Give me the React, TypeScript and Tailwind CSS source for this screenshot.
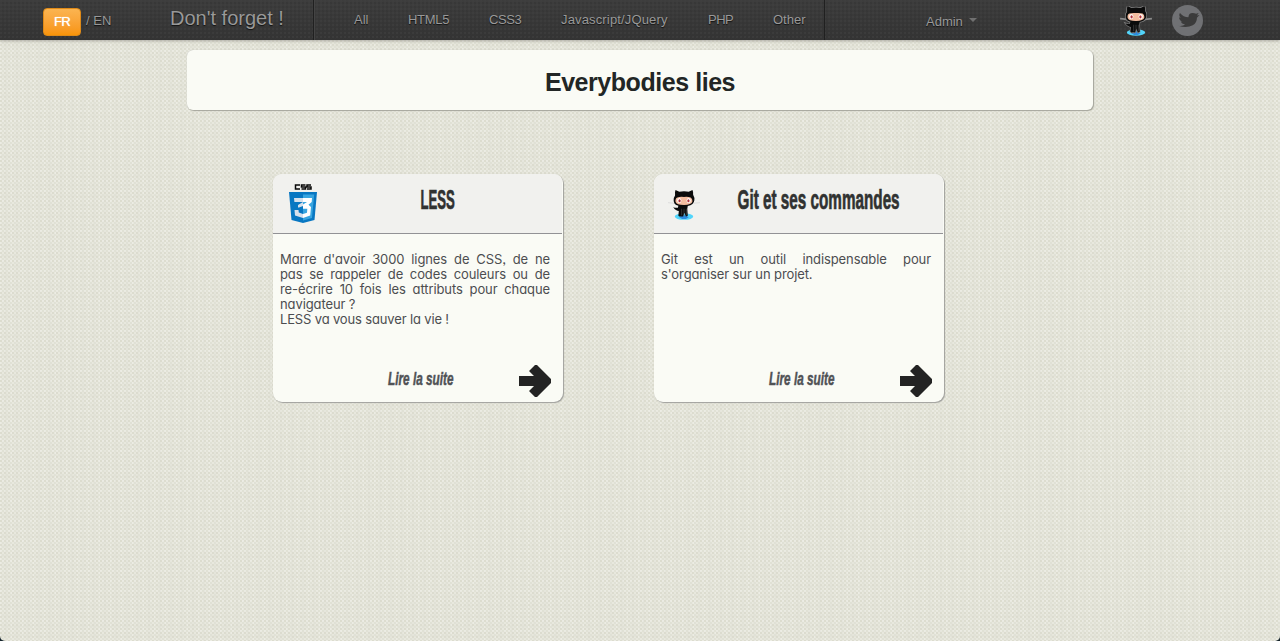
import type { ReactNode } from "react";

function Octocat({ className, dark = false }: { className: string; dark?: boolean }) {
  return (
    <svg viewBox="0 0 34 32" className={className}>
      <path d="M0 13.500 10 14.500M24 14.500 34 13.500" stroke={dark ? "#8b8b8b" : "#dcdcdc"} strokeWidth={dark ? 2 : 1} />
      <ellipse cx="17" cy="28.300" rx="9.800" ry="3.500" fill="#52d5fb" />
      <path d="M12 29q5-4 10 0l-3 2h-4z" fill="#2b8be0" />
      <g stroke={dark ? "#858585" : "none"} strokeWidth="1.4" paintOrder="stroke">
        <path d="M8 0 12 2q5-1 10 0l4-2q1 2 .7 5 1.800 3 1.300 6-.5 5-7 6l-.5 3 .5 7.500-2 .8-1.500-4-1.500 4-2-.2-2 .2-1-1 .5-5q-3 0-6-4 3 1 5 .5l.500-2Q6 16 6 11q0-3 1.500-5Q7 2 8 0z" fill="#0b0b0b" />
      </g>
      <path d="M10 8q3-1 7-.5 4-.5 7 .5 2 1 2 4-1 4-9 4T8 12.500Q7.500 9 10 8z" fill="#f4bda0" />
      <ellipse cx="12" cy="11.300" rx="2.200" ry="2.700" fill="#fff" />
      <ellipse cx="22" cy="11.300" rx="2.200" ry="2.700" fill="#fff" />
      <ellipse cx="12.300" cy="11.500" rx="1.200" ry="1.700" fill="#b02f3a" />
      <ellipse cx="21.700" cy="11.500" rx="1.200" ry="1.700" fill="#b02f3a" />
      <path d="M14.500 20v7M17 20v8M19.500 20v7" stroke="#555" strokeWidth=".6" />
    </svg>
  );
}

function CssLogo() {
  return (
    <svg viewBox="0 0 28 39" className="h-[39px] w-7">
      <path d="M11 1H6.500v4H11M16.500 1H12.500v2h4v2h-4M22 1h-4v2h4v2h-4" fill="none" stroke="#080808" strokeWidth="1.500" />
      <path d="M0 8h28l-2.500 28L14 39 2.500 36z" fill="#0877c2" />
      <path d="M14 10.500h11.200L23 34l-9 2.600z" fill="#38a5e0" />
      <path d="M5 14h9v4H5.400zM14 18v4l-4 1.500H9V21zM5.500 26h4l.3 2.600L14 30v4l-8-2.500z" fill="#d7e1ec" />
      <path d="M14 14h9l-.3 4-3.200 2.800L22 23l-.8 8.500L14 34v-4l4-1.300.3-4H14v-4.200L18 18h-4z" fill="#fff" />
    </svg>
  );
}

function Card({ title, icon, children }: { title: ReactNode; icon: ReactNode; children: ReactNode }) {
  return (
    <article className="flex h-[228px] w-[290px] flex-col overflow-hidden rounded-[9px] bg-[#fafbf5] shadow-[1px_1px_1px_#a0a09d,0_0_1px_#c5c5bd]">
      <header className="mr-px flex h-[60px] shrink-0 border-b border-[#929295] bg-[#f1f1ee]">
        <div className="w-[56px] shrink-0 pl-[14px] pt-[10px]">{icon}</div>
        <h2 className="ml-px mr-4 flex min-w-0 flex-1 justify-center pt-[8px] font-['Liberation_Sans',sans-serif] text-[28px] font-bold leading-9 text-[#303231] [-webkit-text-stroke:0.7px_#303231]">{title}</h2>
      </header>
      <div className="h-[127px] pl-[7px] pr-[13px] pt-[18px] font-[Inter,sans-serif] text-[13px] leading-[15px] tracking-[-0.1px] text-[#4c4d50]">{children}</div>
      <footer className="flex h-10 items-start pl-[114px]">
        <a href="#" className="flex w-[67px] justify-center whitespace-nowrap pt-[6px] font-['Liberation_Sans',sans-serif] text-[19px] font-bold italic leading-6 text-[#505255] [-webkit-text-stroke:0.5px_#505255]"><span className="shrink-0 scale-x-[0.62]">Lire la suite</span></a>
        <svg viewBox="0 0 32 32" className="ml-[65px] mt-[4px] size-8"><path d="M0 11h15l-5-5 6-6h2l14 14v4L18 32h-2l-6-6 5-5H0z" fill="#232323" /></svg>
      </footer>
    </article>
  );
}

export default function App() {
  return (
    <div className="h-[641px] overflow-hidden bg-[#16242c] font-['Liberation_Sans',sans-serif]">
      <div className="h-full rounded-b-[5px] bg-[#e8e8de] bg-[radial-gradient(circle_at_1px_1px,#dcdccf_0.7px,transparent_1px),radial-gradient(circle_at_3px_3px,#e0e1d5_0.7px,transparent_1px),linear-gradient(90deg,#ecece4_1px,transparent_1px,transparent_5px,#e2e2d8_6px,transparent_7px),linear-gradient(#ebebe3_1px,transparent_2px,transparent_5px,#e1e1d6_6px,transparent_7px)] bg-[size:4px_4px,4px_4px,11px_3px,5px_10px]">
        <nav className="flex h-10 bg-[#383838] bg-[radial-gradient(circle_at_1px_1px,#404040_0.5px,transparent_1px),radial-gradient(circle_at_3px_3px,#343434_0.5px,transparent_1px),linear-gradient(#3d3d3d,#333)] bg-[size:4px_4px,4px_4px,100%_100%] text-[13px] leading-5 text-[#999] shadow-[0_1px_3px_#aaa9a0] [text-shadow:0_1px_1px_#111]">
          <div className="flex w-[170px] pl-[43px] pt-2">
            <a href="#" className="h-7 w-[38px] rounded-[4px] border border-[#df8a17] bg-linear-to-b from-[#fbb450] to-[#f89406] pt-[3px] text-center tracking-[-0.6px] text-white [text-shadow:0_0_1px_white]">FR</a>
            <span className="ml-[5px] whitespace-nowrap pt-[3px]">/ EN</span>
          </div>
          <a href="#" className="w-[144px] whitespace-nowrap border-r border-[#202020] pt-[7px] text-[20px] leading-[22px]">Don't forget !</a>
          <div className="flex w-[511px] border-r border-[#202020] pl-10 pt-[10px] shadow-[inset_1px_0_#444]">
            <a href="#" className="w-[54px]">All</a>
            <a href="#" className="w-[81px] tracking-[-0.3px]">HTML5</a>
            <a href="#" className="w-[72px] tracking-[-0.4px]">CSS3</a>
            <a href="#" className="w-[147px] tracking-[0.15px]">Javascript/JQuery</a>
            <a href="#" className="w-[65px] tracking-[-0.5px]">PHP</a>
            <a href="#">Other</a>
          </div>
          <div className="flex w-[295px] pl-[101px] pt-[11px]"><span className="pt-px">Admin</span><span className="ml-[6px] mt-[7px] h-0 w-0 border-x-4 border-t-4 border-x-transparent border-t-[#707070]" /></div>
          <Octocat dark className="mt-[6px] h-[30px] w-8" />
          <svg viewBox="0 0 32 32" className="ml-5 mt-1 size-8"><circle cx="15.500" cy="16.500" r="15.500" fill="#707174" /><path d="M5 22q6 1 8-2-4 0-5-3h2q-4-1-4-5l2 1q-3-3-1-6 4 5 10 5 0-5 5-5 2 0 4 1l3-1-2 3 3-.5-3 3q0 6-5 9-7 4-17 .5z" transform="translate(2 3) scale(.85)" fill="#3b3b3b" /></svg>
        </nav>
        <main>
          <h1 className="mx-auto mt-[10px] flex h-[60px] w-[906px] items-center justify-center rounded-[6px] bg-[#fafbf5] pt-[5px] text-[25px] font-bold tracking-[-0.45px] text-[#222625] shadow-[1px_1px_1px_#a5a59c,0_0_1px_#aaa]">Everybodies lies</h1>
          <div className="ml-[273px] mt-16 flex gap-[91px]">
            <Card title={<span className="shrink-0 scale-x-[0.47] whitespace-nowrap">LESS</span>} icon={<div className="pl-[2px]"><CssLogo /></div>}>
              <p className="text-justify [font-feature-settings:'cv11','ss03']">{"Marre d'avoir 3000 lignes de CSS, de ne pas se rappeler de codes couleurs ou de re-\u2060écrire 10 fois les attributs pour chaque navigateur ?"}</p>
              <p className="tracking-[-0.15px] [font-feature-settings:'cv11','ss03']">LESS va vous sauver la vie !</p>
            </Card>
            <Card title={<span className="shrink-0 scale-x-[0.545] whitespace-nowrap">Git et ses commandes</span>} icon={<Octocat className="mt-[5px] h-8 w-8" />}>
              <p className="text-justify [font-feature-settings:'cv11','ss03']">Git est un outil indispensable pour s'organiser sur un projet.</p>
            </Card>
          </div>
        </main>
      </div>
    </div>
  );
}
